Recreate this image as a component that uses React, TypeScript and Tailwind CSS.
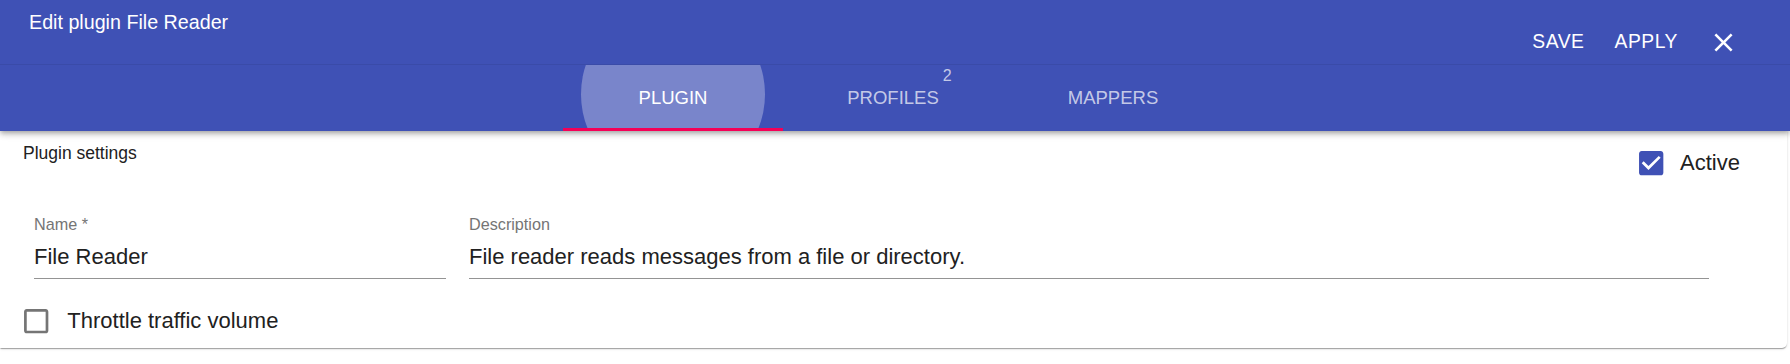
const CHECKED =
  "M19 3H5c-1.11 0-2 .9-2 2v14c0 1.1.89 2 2 2h14c1.11 0 2-.9 2-2V5c0-1.1-.89-2-2-2zm-9 14l-5-5 1.41-1.41L10 14.17l7.59-7.59L19 8l-9 9z";
const UNCHECKED =
  "M19 5v14H5V5h14m0-2H5c-1.1 0-2 .9-2 2v14c0 1.1.9 2 2 2h14c1.1 0 2-.9 2-2V5c0-1.1-.9-2-2-2z";
const CLOSE =
  "M19 6.41L17.59 5 12 10.59 6.41 5 5 6.41 10.59 12 5 17.59 6.41 19 12 13.41 17.59 19 19 17.59 13.41 12z";

function CheckIcon({ checked }: { checked: boolean }) {
  return (
    <svg
      viewBox="0 0 24 24"
      className={checked ? "h-[32.4px] w-[32.4px] shrink-0 fill-[#3f51b5]" : "h-[32.4px] w-[32.4px] shrink-0 fill-[#757575]"}
    >
      <path d={checked ? CHECKED : UNCHECKED} />
    </svg>
  );
}

function Field({ label, value, width, className }: { label: string; value: string; width: string; className: string }) {
  return (
    <div className={`${width} ${className}`}>
      <div className="text-[16.2px] leading-[20px] text-[#757575]">{label}</div>
      <div className="mt-[9px] border-b border-[#949494] pb-[7px] text-[22px] leading-[28px] text-[#212121]">
        {value}
      </div>
    </div>
  );
}

const TABS = [
  { label: "Plugin", active: true },
  { label: "Profiles", badge: "2" },
  { label: "Mappers" },
];

export default function App() {
  return (
    <div className="h-[364px] w-[1790px] overflow-hidden bg-white font-['Liberation_Sans',Arial,sans-serif]">
      <div className="relative z-10 bg-[#3f51b5] text-white shadow-[0_2px_4px_-1px_rgba(0,0,0,0.2),0_4px_5px_0_rgba(0,0,0,0.14),0_1px_10px_0_rgba(0,0,0,0.12)]">
        <div className="flex h-[65px] justify-between border-b border-black/[0.07]">
          <div className="pl-[29px] pt-[10px] text-[19.7px] leading-[24px]">Edit plugin File Reader</div>
          <div className="mt-[18px] flex h-[48px] items-center pr-[51px] text-[19.3px] leading-[48px] tracking-[0.55px]">
            <span>SAVE</span>
            <span className="ml-[30px]">APPLY</span>
            <svg viewBox="0 0 24 24" className="ml-[30px] h-[31px] w-[31px] fill-white">
              <path d={CLOSE} />
            </svg>
          </div>
        </div>
        <div className="flex h-[66px] justify-center pr-[4px]">
          {TABS.map((tab) => (
            <div
              key={tab.label}
              className={`relative flex w-[220px] items-center justify-center overflow-hidden ${tab.active ? "text-white" : "text-white/70"}`}
            >
              {tab.active && (
                <>
                  <span className="absolute left-1/2 top-1/2 h-[184px] w-[184px] -translate-x-1/2 -translate-y-[52%] rounded-full bg-white/30" />
                  <span className="absolute bottom-0 left-0 h-[3px] w-full bg-[#f50057]" />
                </>
              )}
              <span className="relative text-[18.5px] uppercase leading-[22px]">
                {tab.label}
                {tab.badge && (
                  <span className="absolute left-full top-[-19px] ml-[4px] text-[16px] leading-[16px]">{tab.badge}</span>
                )}
              </span>
            </div>
          ))}
        </div>
      </div>

      <div className="mr-[3px] rounded-br-[5px] bg-white pb-[10.5px] shadow-[0_2px_1px_-1px_rgba(0,0,0,0.2),0_1px_1px_0_rgba(0,0,0,0.14),0_1px_3px_0_rgba(0,0,0,0.12)]">
        <div className="flex items-start justify-between">
          <div className="pl-[23px] pt-[12px] text-[17.5px] leading-[20px] text-[#212121]">Plugin settings</div>
          <div className="mt-[16px] flex items-center pr-[47px]">
            <CheckIcon checked />
            <span className="ml-[12.3px] text-[22px] leading-[28px] text-[#212121]">Active</span>
          </div>
        </div>

        <div className="mt-[34.6px] flex">
          <Field label="Name *" value="File Reader" width="w-[412px]" className="ml-[34px]" />
          <Field
            label="Description"
            value="File reader reads messages from a file or directory."
            width="w-[1240px]"
            className="ml-[23px]"
          />
        </div>

        <div className="mt-[25.8px] flex items-center pl-[20.3px]">
          <CheckIcon checked={false} />
          <span className="ml-[14.6px] text-[22px] leading-[28px] text-[#212121]">Throttle traffic volume</span>
        </div>
      </div>
    </div>
  );
}
